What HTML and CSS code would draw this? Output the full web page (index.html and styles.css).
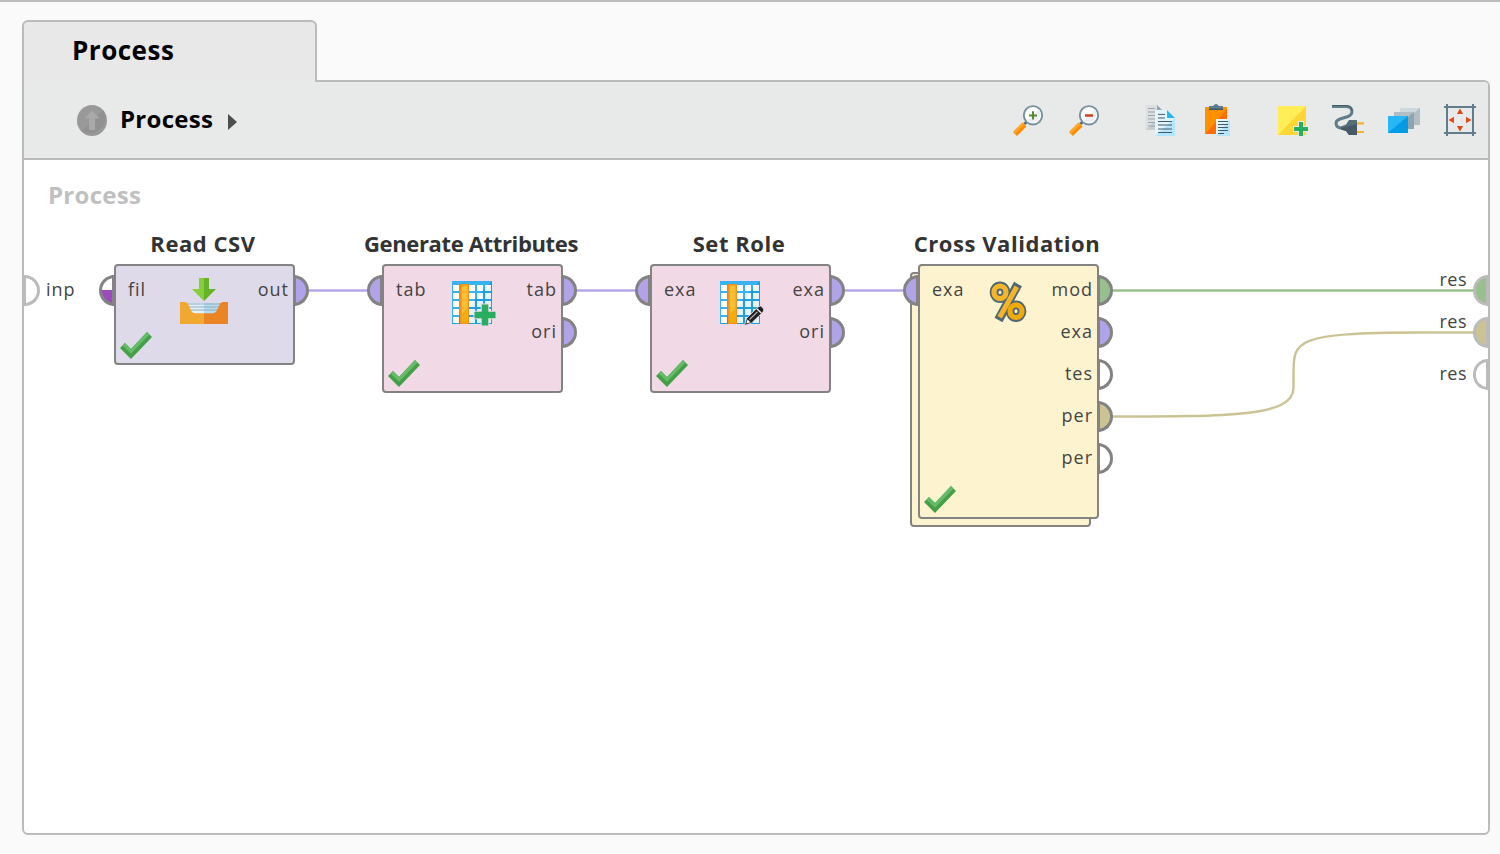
FILE: index.html
```html
<!DOCTYPE html>
<html lang="en">
<head>
    <meta charset="UTF-8">
    <meta name="viewport" content="width=device-width, initial-scale=1.0">
    <title>Process</title>
    <link rel="stylesheet" href="styles.css">
</head>
<body>
    <!-- Shared icon shapes -->
    <svg class="icon-defs" width="0" height="0">
        <symbol id="check" viewBox="0 0 32 27">
            <path d="M0 16 L5 11 L11 17 L27 0 L32 5 L11 27 Z" fill="#43a047"/>
            <path d="M2.5 13.5 L5 11 L11 17 L27 0 L29.5 2.5 L11 21.8 Z" fill="#66bb6a"/>
        </symbol>
        <symbol id="table" viewBox="0 0 48 48">
            <rect x="4" y="3" width="40" height="43" fill="#36b3f0"/>
            <path d="M44 3 V46 H4 Z" fill="#1f9fe0"/>
            <path d="M5 7h6v6h-6z M21 7h6v6h-6z M29 7h6v6h-6z M37 7h6v6h-6z M5 15h6v6h-6z M21 15h6v6h-6z M29 15h6v6h-6z M37 15h6v6h-6z M5 23h6v6h-6z M21 23h6v6h-6z M29 23h6v6h-6z M37 23h6v6h-6z M5 31h6v6h-6z M21 31h6v6h-6z M29 31h6v6h-6z M37 31h6v6h-6z M5 39h6v6h-6z M21 39h6v6h-6z M29 39h6v6h-6z M37 39h6v6h-6z" fill="#fff"/>
            <path d="M43 7v6h-6z M29 15h6l-6 6z M37 15h6v6h-6z M29 23h6v6h-6z M37 23h6v6h-6z M21 29l6-6v6z M21 31h6v6h-6z M29 31h6v6h-6z M37 31h6v6h-6z M21 39h6v6h-6z M29 39h6v6h-6z M37 39h6v6h-6z" fill="#e1f4fd"/>
            <rect x="12" y="6" width="9" height="40" fill="#fb8f14"/>
            <rect x="13.700" y="7.500" width="5.800" height="37" fill="#f6c035"/>
            <path d="M19.500 30 V44.500 H13.700 V36 Z" fill="#f0ad10"/>
            <path d="M13.700 14h5.800 M13.700 22h5.800 M13.700 30h5.800 M13.700 38h5.800" stroke="#f5b02a"/>
        </symbol>
    </svg>

    <div class="workspace">
        <div class="tab">Process</div>
        <div class="panel">
            <div class="toolbar">
                <div class="breadcrumb">
                    <svg class="up-icon" viewBox="0 0 30 31">
                        <ellipse cx="15" cy="15.500" rx="15" ry="15.500" fill="#999"/>
                        <path d="M26 5 A15 15.500 0 0 1 5 26 Z" fill="#919191"/>
                        <path d="M15 5.500 L22.500 13.500 H18 V25 H12 V13.500 H7.500 Z" fill="#a9a9a9"/>
                    </svg>
                    <span class="crumb">Process</span>
                    <svg class="crumb-arrow" viewBox="0 0 9 16"><path d="M0 0 L9 8 L0 16 Z" fill="#4d4d4d"/></svg>
                </div>
                <div class="tools">
                    <div class="tool-group">
                        <svg class="tool" viewBox="0 0 32 32">
                            <path d="M12.500 20.500 L3 30" stroke="#fb8c00" stroke-width="5.500"/>
                            <path d="M11.500 19.500 L2 29" stroke="#ffa726" stroke-width="2.500"/>
                            <path d="M15.500 17 L12.500 20" stroke="#546e7a" stroke-width="3"/>
                            <circle cx="21" cy="11.300" r="9.200" fill="#fff" stroke="#78909c" stroke-width="1.900"/>
                            <path d="M27 5 A9 9 0 0 1 15 17.500 Z" fill="#eceff1"/>
                            <path d="M21 7.300 V15.500 M17 11.400 H25" stroke="#558b2f" stroke-width="2"/>
                        </svg>
                        <svg class="tool" viewBox="0 0 32 32">
                            <path d="M12.500 20.500 L3 30" stroke="#fb8c00" stroke-width="5.500"/>
                            <path d="M11.500 19.500 L2 29" stroke="#ffa726" stroke-width="2.500"/>
                            <path d="M15.500 17 L12.500 20" stroke="#546e7a" stroke-width="3"/>
                            <circle cx="21" cy="11.300" r="9.200" fill="#fff" stroke="#78909c" stroke-width="1.900"/>
                            <path d="M27 5 A9 9 0 0 1 15 17.500 Z" fill="#eceff1"/>
                            <path d="M17 11.400 H25" stroke="#cc4125" stroke-width="2.500"/>
                        </svg>
                    </div>
                    <div class="tool-group">
                        <svg class="tool" viewBox="0 0 32 32">
                            <path d="M1.500 1 H13 L18 6 V26 H1.500 Z" fill="#dadfe1"/>
                            <path d="M18 10 V26 H1.500 Z" fill="#c6ced2"/>
                            <path d="M13 1 L18 6 H13 Z" fill="#90a4ae"/>
                            <path d="M4 4.500h7 M4 8h7 M4 11.500h8 M4 15h8 M4 18.500h8 M4 22h8" stroke="#9aa8af"/>
                            <path d="M11 6 H23 L31 14 V32 H11 Z" fill="#e1f5fe"/>
                            <path d="M31 14 V32 H11 Z" fill="#b3e5fc"/>
                            <path d="M23 6 L31 14 H23 Z" fill="#29b6f6"/>
                            <path d="M14 10.400h7 M14 14h7 M14 17.500h14 M14 21h14 M14 25h14 M14 28.500h14" stroke="#455a64" stroke-width="1"/>
                        </svg>
                        <svg class="tool" viewBox="-1 0 32 32">
                            <rect x="4" y="3" width="22" height="27" fill="#ff9100"/>
                            <path d="M26 5 V30 H4 Z" fill="#ff6d00"/>
                            <path d="M8 6 V2 H12 Q15 -2 18 2 H22 V6 Z" fill="#607d8b"/>
                            <path d="M8 4.500h14v1.500h-14z" fill="#455a64"/>
                            <path d="M15 15h14v17h-14z" fill="#e1f5fe"/>
                            <path d="M29 15v17h-14z" fill="#b3e5fc"/>
                            <path d="M17 17.500h10 M17 20.500h10 M17 23.500h10 M17 26.500h10 M17 29.500h6" stroke="#455a64"/>
                        </svg>
                    </div>
                    <div class="tool-group">
                        <svg class="tool" viewBox="0 0 32 32">
                            <rect x="2" y="2" width="28" height="29" fill="#ffee58"/>
                            <path d="M30 2 V31 H2 Z" fill="#fdd835"/>
                            <path d="M25 17 V33 M17 25 H33" stroke="#e8eaea" stroke-width="6"/>
                            <path d="M25 18 V32 M18 25 H32" stroke="#27ae60" stroke-width="4"/>
                        </svg>
                        <svg class="tool" viewBox="0 0 32 32">
                            <path d="M0 2.500 H14 C21 2.500 22 10 16 12.500 L8 15 C2 17 3 24 10 24" fill="none" stroke="#607d8b" stroke-width="3"/>
                            <path d="M0 1.500 H14 C18 1.500 20 4 20 7" fill="none" stroke="#455a64" stroke-width="1"/>
                            <path d="M9 22.500 L14 20.500 L17 16 H25 V31 H17 L14 27 L9 25.500 Z" fill="#546e7a"/>
                            <path d="M9 24 L14 23 L25 20 V31 H17 L14 27 L9 25.500 Z" fill="#455a64"/>
                            <path d="M25 19.300h7 M25 28h7" stroke="#fbb02d" stroke-width="2.200"/>
                        </svg>
                        <svg class="tool" viewBox="0 0 32 32">
                            <path d="M12 4h20v17h-20z" fill="#cfd8dc"/>
                            <path d="M32 4v17h-20z" fill="#b0bec5"/>
                            <path d="M6 8h20v17h-20z" fill="#b0bec5"/>
                            <path d="M26 8v17h-20z" fill="#90a4ae"/>
                            <path d="M0 12h20v17h-20z" fill="#29b6f6"/>
                            <path d="M20 12v17h-20z" fill="#039be5"/>
                        </svg>
                        <svg class="tool" viewBox="0 0 32 32">
                            <path d="M3 0 V32 M29 0 V32 M0 3 H32 M0 29 H32" stroke="#607d8b" stroke-width="2"/>
                            <path d="M16 4.500 L19.200 10 H12.800 Z M16 27.500 L19.200 22 H12.800 Z M4.500 16 L10 12.800 V19.200 Z M27.500 16 L22 12.800 V19.200 Z" fill="#dd4b1a"/>
                        </svg>
                    </div>
                </div>
            </div>

            <div class="canvas">
                <div class="canvas-title">Process</div>

                <!-- Connections between the ports -->
                <svg class="wires" viewBox="24 160 1464 673">
                    <path class="wire table" d="M308 290.500 H369 M576 290.500 H637 M844 290.500 H905"/>
                    <path class="wire model" d="M1111 290.500 H1476"/>
                    <path class="wire performance" d="M1111 416.500 C1230 416.500 1293.500 416.500 1293.500 388 V374 C1293.500 341 1293.500 332.500 1420 332.500 H1476"/>
                </svg>

                <div class="edge edge-input">
                    <div class="port right empty"></div>
                    <span class="label">inp</span>
                </div>

                <div class="node read-csv">
                    <div class="node-title">Read CSV</div>
                    <div class="box">
                        <div class="ports">
                            <div class="inputs">
                                <div class="row"><div class="port left file"></div><span class="label">fil</span></div>
                            </div>
                            <svg class="op-icon" viewBox="0 0 48 48">
                                <path d="M19 0 H24 V23 L12 11 H19 Z" fill="#85cf3f"/>
                                <path d="M29 0 H24 V23 L36 11 H29 Z" fill="#66b327"/>
                                <path d="M7 25h17v11h-17z" fill="#e3f2f8"/>
                                <path d="M24 25h17v11h-17z" fill="#b5dcf0"/>
                                <path d="M7 26h34 M8 29h32 M9 32h30" stroke="#8fadbb"/>
                                <path d="M0 24 H5 C10 24 9.500 35.300 15 35.300 H24 V46 H0 Z" fill="#f0a830"/>
                                <path d="M48 24 H43 C38 24 38.500 35.300 33 35.300 H24 V46 H48 Z" fill="#ea8424"/>
                            </svg>
                            <div class="outputs">
                                <div class="row"><span class="label">out</span><div class="port right table"></div></div>
                            </div>
                        </div>
                        <svg class="check"><use href="#check"/></svg>
                    </div>
                </div>

                <div class="node generate-attributes">
                    <div class="node-title">Generate Attributes</div>
                    <div class="box">
                        <div class="ports">
                            <div class="inputs">
                                <div class="row"><div class="port left table"></div><span class="label">tab</span></div>
                            </div>
                            <svg class="op-icon" viewBox="0 0 48 48">
                                <use href="#table"/>
                                <path d="M37 25.500 V48.500 M25.500 37 H48.500" stroke="#f1d9e6" stroke-width="8.500"/>
                                <path d="M37 26.500 V47.500 M26.500 37 H47.500" stroke="#27ae60" stroke-width="6.500"/>
                            </svg>
                            <div class="outputs">
                                <div class="row"><span class="label">tab</span><div class="port right table"></div></div>
                                <div class="row"><span class="label">ori</span><div class="port right table"></div></div>
                            </div>
                        </div>
                        <svg class="check"><use href="#check"/></svg>
                    </div>
                </div>

                <div class="node set-role">
                    <div class="node-title">Set Role</div>
                    <div class="box">
                        <div class="ports">
                            <div class="inputs">
                                <div class="row"><div class="port left table"></div><span class="label">exa</span></div>
                            </div>
                            <svg class="op-icon" viewBox="0 0 48 48">
                                <use href="#table"/>
                                <path d="M28.500 47.500 L30.500 40.500 L42 29 Q44.500 27 46.500 29.500 Q48.700 31.500 47 34 L35.500 45 Z" fill="#231f20" stroke="#f1d9e6" stroke-width=".8"/>
                                <path d="M40.800 30.700 L45.300 35" stroke="#fff" stroke-width="1.200"/>
                                <path d="M33.500 41.500 L41.500 33.800" stroke="#a8a8a8" stroke-width="1.300"/>
                                <path d="M30.300 45.500 L31.500 41.500 L34.500 44.300 Z" fill="#fff"/>
                            </svg>
                            <div class="outputs">
                                <div class="row"><span class="label">exa</span><div class="port right table"></div></div>
                                <div class="row"><span class="label">ori</span><div class="port right table"></div></div>
                            </div>
                        </div>
                        <svg class="check"><use href="#check"/></svg>
                    </div>
                </div>

                <div class="node cross-validation">
                    <div class="node-title">Cross Validation</div>
                    <div class="box">
                        <div class="ports">
                            <div class="inputs">
                                <div class="row"><div class="port left table"></div><span class="label">exa</span></div>
                            </div>
                            <svg class="op-icon" viewBox="0 0 48 48">
                                <g fill="none" stroke="#4f6872">
                                    <ellipse cx="16" cy="14.300" rx="6" ry="6.300" stroke-width="8.800"/>
                                    <ellipse cx="32" cy="33.200" rx="6" ry="6.300" stroke-width="8.800"/>
                                    <path d="M34 6 L14.500 42" stroke-width="9"/>
                                </g>
                                <g fill="none" stroke="#f5b52a">
                                    <path d="M32.800 8.800 L15.700 39.200" stroke-width="5"/>
                                    <ellipse cx="16" cy="14.300" rx="6" ry="6.300" stroke-width="5.200"/>
                                    <ellipse cx="32" cy="33.200" rx="6" ry="6.300" stroke="#f2a90a" stroke-width="5.200"/>
                                </g>
                            </svg>
                            <div class="outputs">
                                <div class="row"><span class="label">mod</span><div class="port right model"></div></div>
                                <div class="row"><span class="label">exa</span><div class="port right table"></div></div>
                                <div class="row"><span class="label">tes</span><div class="port right"></div></div>
                                <div class="row"><span class="label">per</span><div class="port right performance"></div></div>
                                <div class="row"><span class="label">per</span><div class="port right"></div></div>
                            </div>
                        </div>
                        <svg class="check"><use href="#check"/></svg>
                    </div>
                </div>

                <div class="edge edge-results">
                    <div class="row"><span class="label raised">res</span><div class="port left model"></div></div>
                    <div class="row"><span class="label raised">res</span><div class="port left performance"></div></div>
                    <div class="row"><span class="label">res</span><div class="port left"></div></div>
                </div>
            </div>
        </div>
    </div>
</body>
</html>
```
FILE: styles.css
```css
* {
    box-sizing: border-box;
}
body {
    margin: 0;
    height: 854px;
    overflow: hidden;
    font-family: "Open Sans", "Noto Sans", sans-serif;
    background-color: #fafafa;
    border-top: 2px solid #bbb;
}
svg {
    display: block;
    flex-shrink: 0;
}
.icon-defs {
    position: absolute;
}
.workspace {
    display: flex;
    flex-direction: column;
    align-items: flex-start;
    height: 833px;
    padding: 18px 10px 0 22px;
}
.tab {
    position: relative;
    z-index: 1;
    width: 295px;
    height: 62px;
    margin-bottom: -2px;
    padding-left: 48px;
    border: 2px solid #bbb;
    border-bottom: none;
    border-radius: 6px 6px 0 0;
    background-color: #e8e8e8;
    font-size: 26px;
    font-weight: bold;
    line-height: 56px;
    letter-spacing: 0.5px;
}
.panel {
    display: flex;
    flex-direction: column;
    flex: 1;
    width: 1468px;
    border: 2px solid #bbb;
    border-radius: 0 6px 6px 6px;
    background-color: #fff;
    overflow: hidden;
}
.toolbar {
    display: flex;
    justify-content: space-between;
    align-items: center;
    height: 78px;
    padding: 0 12px 0 53px;
    border-bottom: 2px solid #bbb;
    background-color: #e8eae9;
}
.breadcrumb {
    display: flex;
    align-items: center;
}
.up-icon {
    width: 30px;
    height: 31px;
}
.crumb {
    margin: -4px 15px 0 13px;
    font-size: 24px;
    font-weight: bold;
    letter-spacing: 0.3px;
}
.crumb-arrow {
    width: 9px;
    height: 16px;
    margin-top: 4px;
}
.tools {
    display: flex;
    gap: 44px;
}
.tool-group {
    display: flex;
    gap: 24px;
}
.tool {
    width: 32px;
    height: 32px;
    overflow: visible;
}
.canvas {
    position: relative;
    flex: 1;
    padding: 18px 24px;
}
.canvas-title {
    color: #c0c0c0;
    font-size: 24px;
    font-weight: bold;
    line-height: 33px;
    letter-spacing: 0.3px;
}
.wires {
    position: absolute;
    top: 0;
    left: 0;
    width: 1464px;
    height: 673px;
}
.wire {
    fill: none;
    stroke-width: 2.4;
}
.wire.table {
    stroke: #b5a6e8;
}
.wire.model {
    stroke: #98c08f;
}
.wire.performance {
    stroke: #cbc394;
}

/* Operators */
.node {
    position: absolute;
    top: 68px;
    display: flex;
    flex-direction: column;
    align-items: center;
    width: 181px;
}
.read-csv {
    left: 90px;
}
.generate-attributes {
    left: 358px;
}
.set-role {
    left: 626px;
}
.cross-validation {
    left: 894px;
}
.node-title {
    height: 36px;
    margin-left: -3px;
    color: #333;
    font-size: 22px;
    font-weight: bold;
    line-height: 30px;
    white-space: nowrap;
    letter-spacing: 0.55px;
}
.generate-attributes .node-title {
    letter-spacing: -0.36px;
}
.box {
    position: relative;
    display: flex;
    flex-direction: column;
    width: 181px;
    height: 101px;
    padding: 4px 0 4px;
    border: 2px solid #838383;
    border-radius: 4px;
    background-color: #dedaea;
}
.generate-attributes .box,
.set-role .box {
    height: 129px;
    background-color: #f1d9e6;
}
.cross-validation .box {
    height: 255px;
    background-color: #fdf4cf;
}
/* Second sheet behind an operator with a subprocess */
.cross-validation::before {
    content: "";
    position: absolute;
    top: 44px;
    left: -8px;
    box-sizing: border-box;
    width: 181px;
    height: 255px;
    border: 2px solid #838383;
    border-radius: 4px;
    background-color: #fdf4cf;
}
.ports {
    display: grid;
    grid-template-columns: 64px 48px 1fr;
}
.row {
    display: flex;
    height: 42px;
    padding-top: 5px;
}
.outputs .row {
    justify-content: flex-end;
}
.port {
    flex-shrink: 0;
    width: 16px;
    height: 31px;
    border: 3px solid #838383;
    background-color: #fff;
}
.port.right {
    border-radius: 0 16px 16px 0;
}
.port.left {
    border-radius: 16px 0 0 16px;
}
.port.table {
    background-color: #b1a3e8;
}
.port.model {
    background-color: #98c08f;
}
.port.performance {
    background-color: #cbc394;
}
.port.file {
    background: linear-gradient(#fff 50%, #9a4bbf 50%);
}
.inputs .port {
    margin-left: -17px;
}
.outputs .port {
    margin-right: -16px;
}
.label {
    color: #444;
    font-size: 18px;
    line-height: 28px;
    letter-spacing: 1px;
}
.inputs .label {
    margin-left: 13px;
}
.outputs .label {
    margin-right: 4px;
}
.op-icon {
    width: 48px;
    height: 48px;
    margin-top: 8px;
    overflow: visible;
}
.check {
    width: 32px;
    height: 27px;
    margin: auto 0 0 4px;
}

/* Ports on the canvas border */
.edge {
    position: absolute;
}
.edge .port {
    border-color: #bbb;
}
.edge-input {
    top: 115px;
    left: 0;
    display: flex;
}
.edge-input .port {
    border-left-width: 2px;
}
.edge-input .label {
    margin-left: 6px;
}
.edge-results {
    top: 110px;
    right: 0;
}
.edge-results .port {
    width: 15px;
    border-right-width: 2px;
}
.edge-results .label {
    margin-right: 6px;
    letter-spacing: 0.5px;
}
.edge-results .raised {
    margin-top: -10px;
}
```
